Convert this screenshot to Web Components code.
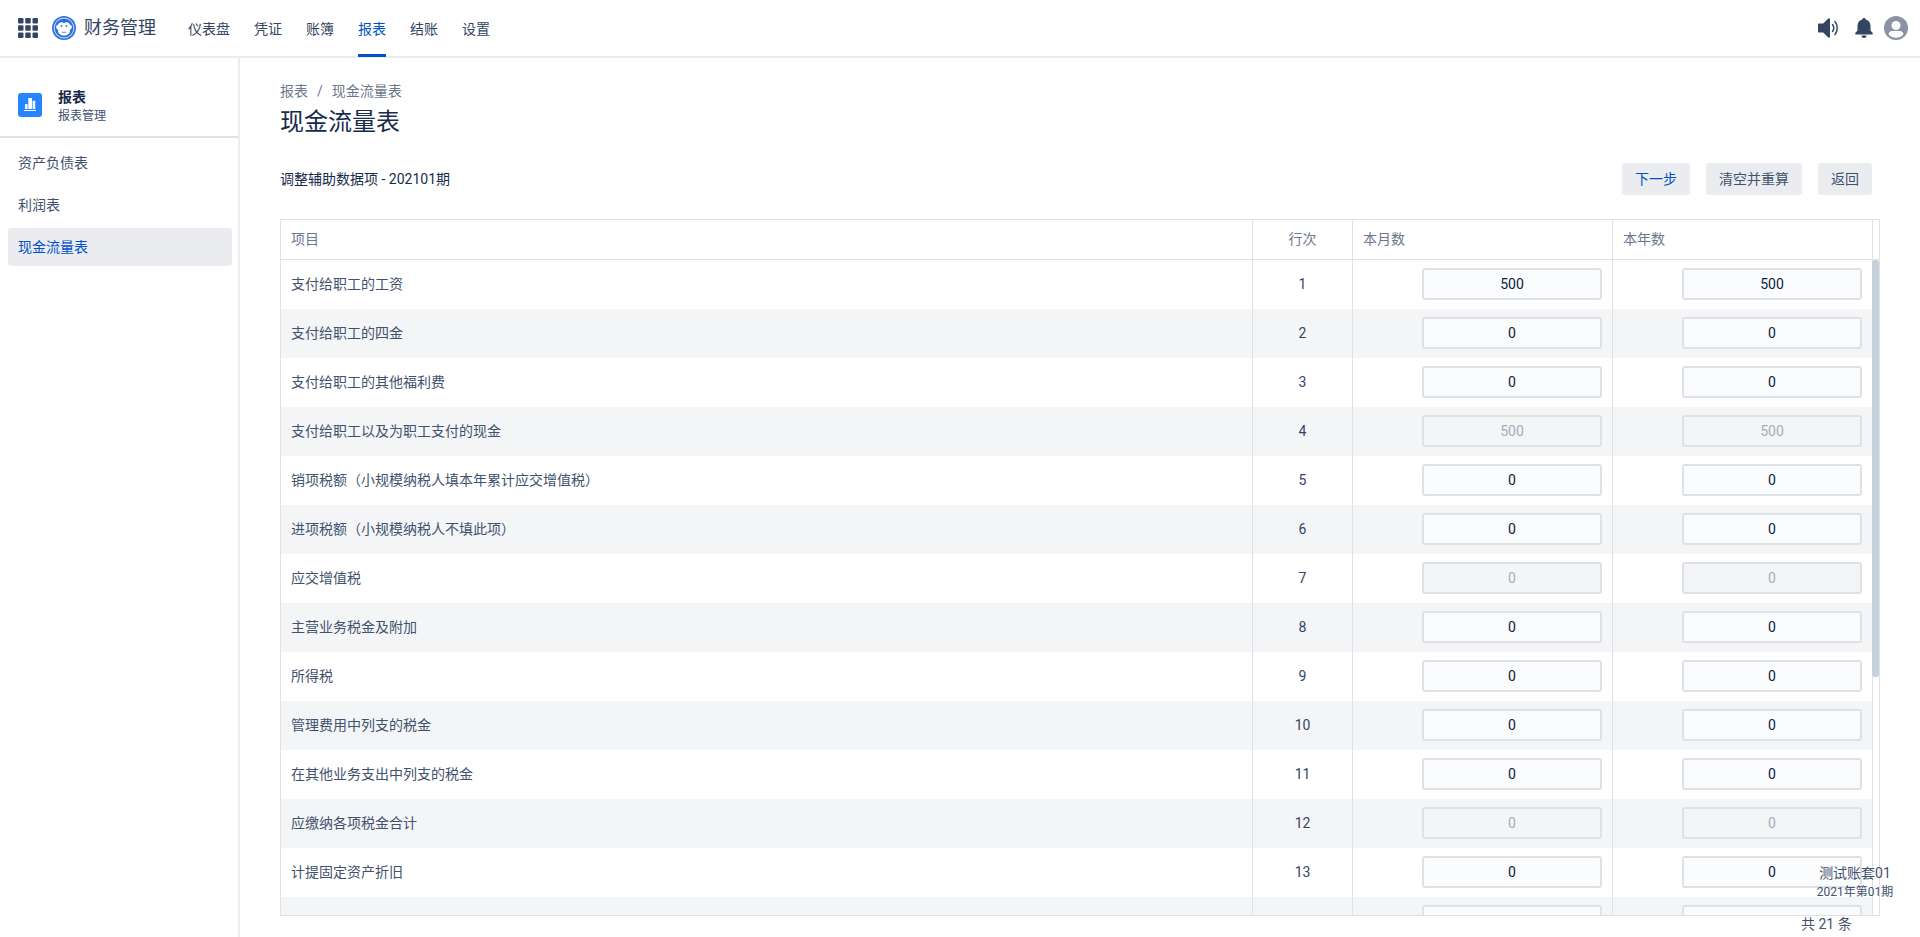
<!DOCTYPE html>
<html lang="zh"><head><meta charset="utf-8"><title>现金流量表</title>
<style>
html,body{margin:0;height:100%;overflow:hidden;background:#fff}
body{font:14px/20px Roboto,"Noto Sans CJK SC",sans-serif;color:#172b4d}
</style></head><body>
<app-shell></app-shell>
<script>
const html=(s)=>{const t=document.createElement('template');t.innerHTML=s;return t;};
function def(name,tpl,init){
  const T=html(tpl);
  customElements.define(name,class extends HTMLElement{
    constructor(){super();this.attachShadow({mode:'open'}).appendChild(T.content.cloneNode(true));}
    connectedCallback(){if(init&&!this._i){this._i=1;init.call(this,this.shadowRoot);}}
  });
}
def('top-bar',`<style>
:host{display:flex;align-items:center;height:56px;border-bottom:2px solid #ebecf0;padding:0 12px 0 18px;box-sizing:content-box;background:#fff}
.grid{width:20px;height:20px;display:block;margin-right:14px}
.logo{width:24px;height:24px;display:block;margin-right:8px}
.name{font-size:18px;line-height:24px;color:#344563;width:72px;margin-right:32px;white-space:nowrap}
nav{display:flex;gap:24px;height:56px;flex:1}
.right{display:flex;align-items:center}
</style>
<svg class="grid" viewBox="0 0 20 20" fill="#344563"><rect x="0" y="0" width="5.500" height="5.500" rx="1"/><rect x="7.250" y="0" width="5.500" height="5.500" rx="1"/><rect x="14.500" y="0" width="5.500" height="5.500" rx="1"/><rect x="0" y="7.250" width="5.500" height="5.500" rx="1"/><rect x="7.250" y="7.250" width="5.500" height="5.500" rx="1"/><rect x="14.500" y="7.250" width="5.500" height="5.500" rx="1"/><rect x="0" y="14.500" width="5.500" height="5.500" rx="1"/><rect x="7.250" y="14.500" width="5.500" height="5.500" rx="1"/><rect x="14.500" y="14.500" width="5.500" height="5.500" rx="1"/></svg>
<svg class="logo" viewBox="0 0 24 24"><circle cx="12" cy="12" r="12" fill="#2f6fdc"/><circle cx="12" cy="12" r="10.400" fill="#cfe0fa"/><circle cx="12" cy="12" r="9.400" fill="#2f6fdc"/><circle cx="6.800" cy="11" r="2.600" fill="#fff"/><circle cx="17.200" cy="11" r="2.600" fill="#fff"/><circle cx="9.400" cy="9.300" r="3.100" fill="#fff"/><circle cx="14.600" cy="9.300" r="3.100" fill="#fff"/><ellipse cx="12" cy="15" rx="6" ry="4.700" fill="#fff"/><circle cx="9.500" cy="10" r=".9" fill="#2f6fdc"/><circle cx="14.500" cy="10" r=".9" fill="#2f6fdc"/><path d="M10 16.300h4" stroke="#2f6fdc" stroke-width=".8"/></svg>
<div class="name">财务管理</div>
<nav><slot></slot></nav>
<div class="right"><slot name="right"></slot></div>`);
def('nav-tab',`<style>
:host{display:block;height:56px;line-height:58px;font-size:14px;color:#344563;position:relative;white-space:nowrap}
:host([active]){color:#0052cc}
:host([active])::after{content:"";position:absolute;left:0;right:0;bottom:-1px;height:3px;background:#0052cc}
</style><slot></slot>`);
def('side-bar',`<style>
:host{display:block;width:238px;border-right:2px solid #ebecf0;flex:none;background:#fff}
.head{height:42px;padding:27px 18px 9px;display:flex;align-items:center;gap:16px;border-bottom:2px solid #dfe1e6}
.ic{width:24px;height:24px;border-radius:3px;background:#2684ff;flex:none;margin-top:-2px}
.ic svg{display:block}
.t{font-weight:700;font-size:14px;line-height:18px;color:#172b4d}
.s{font-size:12px;line-height:16px;color:#42526e;margin-top:2px}
.list{padding:0 6px 0 8px}
</style>
<div class="head"><div class="ic"><svg width="24" height="24" viewBox="0 0 24 24" fill="#fff"><rect x="7" y="11" width="2.600" height="5"/><rect x="10.300" y="5" width="3.700" height="11"/><rect x="14.600" y="7.800" width="2.600" height="8.200"/><rect x="6" y="17" width="12" height="1"/></svg></div>
<div><div class="t">报表</div><div class="s">报表管理</div></div></div>
<div class="list"><slot></slot></div>`);
def('side-item',`<style>
:host{display:block;height:38px;line-height:38px;padding:0 10px;margin-top:4px;border-radius:3px;font-size:14px;color:#42526e;white-space:nowrap}
:host([active]){background:#ebecf0;color:#0052cc}
</style><slot></slot>`);
def('app-button',`<style>
:host{display:block;height:32px;line-height:32px;padding:0 13px;background:#ebecf0;border-radius:3px;color:#42526e;font-size:14px;white-space:nowrap}
:host([primary]){color:#0052cc}
</style><slot></slot>`);
def('num-field',`<style>
:host{display:block;width:180px;height:32px;box-sizing:border-box;border:2px solid #dfe1e6;border-radius:3px;background:#fafbfc;text-align:center;line-height:28px;font-size:14px;color:#091e42}
:host([disabled]){background:#f4f5f7;color:#a5adba}
</style><slot></slot>`);
def('data-row',`<style>
:host{display:grid;grid-template-columns:972px 100px 260px 260px;height:49px;box-sizing:border-box;background:#fff}
:host([alt]){background:#f4f5f7}
.c{box-sizing:border-box;display:flex;align-items:center;font-size:14px;color:#42526e;padding-bottom:1px}
.a{padding-left:11px;white-space:nowrap}
.b{justify-content:center;border-left:1px solid #dfe1e6;color:#344563}
.d{justify-content:flex-end;padding-right:10px;border-left:1px solid #dfe1e6}
</style>
<div class="c a"><slot name="label"></slot></div><div class="c b"><slot name="no"></slot></div>
<div class="c d"><slot name="m"></slot></div><div class="c d"><slot name="y"></slot></div>`);
def('cash-table',`<style>
:host{display:block;width:1600px;height:697px;box-sizing:border-box;border:1px solid #dfe1e6;position:relative;overflow:hidden}
.h{display:grid;grid-template-columns:971px 100px 260px 260px 7px;height:40px;border-bottom:1px solid #dfe1e6;box-sizing:border-box;font-size:14px;color:#6b778c;line-height:39px}
.h div{padding-left:10px;border-left:1px solid #dfe1e6;box-sizing:border-box}
.h div:first-child{border-left:0}
.h .n{padding:0;text-align:center}
.h .g{padding:0}
.body{display:flex;height:655px;overflow:hidden}
.rows{width:1592px;flex:none;margin-left:-1px}
.track{width:7px;box-sizing:border-box;border-left:1px solid #dfe1e6;flex:none}
.thumb{width:7px;height:417px;background:#c7d1db;border-radius:3px;margin-left:-1px}
</style>
<div class="h"><div>项目</div><div class="n">行次</div><div>本月数</div><div>本年数</div><div class="g"></div></div>
<div class="body"><div class="rows"><slot></slot></div><div class="track"><div class="thumb"></div></div></div>`);
def('top-actions',`<style>
:host{display:flex;align-items:center}
svg{display:block}
</style>
<svg width="24" height="24" viewBox="0 0 24 24" style="margin-right:12px"><path d="M3 7.500h4.200L12.300 2.600c.7-.6 1.700-.2 1.700.7v17.400c0 .9-1 1.300-1.700.7L7.200 16.500H3c-.6 0-1-.4-1-1v-7c0-.6.4-1 1-1z" fill="#344563"/><path d="M16.500 8.500c1.500 2 1.500 5 0 7" fill="none" stroke="#344563" stroke-width="1.500" stroke-linecap="round"/><path d="M19 5.500c2.900 3.500 2.900 9.500 0 13" fill="none" stroke="#344563" stroke-width="1.500" stroke-linecap="round"/></svg>
<svg width="24" height="24" viewBox="0 0 24 24" style="margin-right:8px"><path d="M12 2c1 0 1.600.6 1.800 1.600 3.100.8 4.700 3.300 4.700 6.400v4.500l2.200 2.600c.4.600.1 1.400-.7 1.400H4c-.8 0-1.100-.8-.7-1.400l2.200-2.600V10c0-3.100 1.600-5.600 4.700-6.400C10.400 2.600 11 2 12 2z" fill="#344563"/><path d="M9.400 19.400h5.200c-.2 1.500-1.200 2.600-2.600 2.600s-2.400-1.100-2.600-2.600z" fill="#344563"/></svg>
<svg width="24" height="24" viewBox="0 0 24 24"><defs><clipPath id="c"><circle cx="12" cy="12" r="10"/></clipPath></defs><circle cx="12" cy="12" r="12" fill="#8993a4"/><g clip-path="url(#c)"><circle cx="12" cy="9.500" r="4.500" fill="#fff"/><rect x="4.500" y="15" width="15" height="10" rx="4" fill="#fff"/></g></svg>`);
def('app-shell',`<style>
:host{display:block;height:937px;overflow:hidden;position:relative;background:#fff}
.main{display:flex;height:879px}
.content{flex:1;padding:20px 0 0 40px;min-width:0}
.crumb{font-size:14px;line-height:20px;color:#6b778c;display:flex;gap:9px;margin-top:3px}
h1{margin:5px 0 0;font-size:24px;font-weight:400;line-height:32px;color:#172b4d}
.bar{display:flex;align-items:center;height:32px;margin-top:25px;width:1592px}
.bar .ti{flex:1;font-size:14px;color:#172b4d}
.btns{display:flex;gap:16px}
.tw{margin-top:24px}
.acct{position:absolute;left:1805px;width:100px;top:863px;text-align:center;color:#42526e;font-size:14px;line-height:20px;white-space:nowrap}
.acct small{display:block;font-size:12px;line-height:18px}
.total{position:absolute;left:1801px;top:914px;font-size:14px;line-height:20px;color:#42526e;white-space:nowrap}
</style>
<top-bar>
<nav-tab>仪表盘</nav-tab><nav-tab>凭证</nav-tab><nav-tab>账簿</nav-tab><nav-tab active>报表</nav-tab><nav-tab>结账</nav-tab><nav-tab>设置</nav-tab>
<top-actions slot="right"></top-actions>
</top-bar>
<div class="main">
<side-bar><side-item style="margin-top:6px">资产负债表</side-item><side-item>利润表</side-item><side-item active>现金流量表</side-item></side-bar>
<div class="content">
<div class="crumb"><span>报表</span><span>/</span><span>现金流量表</span></div>
<h1>现金流量表</h1>
<div class="bar"><div class="ti">调整辅助数据项 - 202101期</div><div class="btns"><app-button primary>下一步</app-button><app-button>清空并重算</app-button><app-button>返回</app-button></div></div>
<div class="tw"><cash-table id="t"></cash-table></div>
</div></div>
<div class="acct">测试账套01<small>2021年第01期</small></div>
<div class="total">共 21 条</div>`,function(r){
  const data=[['支付给职工的工资',500,500],['支付给职工的四金',0,0],['支付给职工的其他福利费',0,0],['支付给职工以及为职工支付的现金',500,500,1],['销项税额（小规模纳税人填本年累计应交增值税）',0,0],['进项税额（小规模纳税人不填此项）',0,0],['应交增值税',0,0,1],['主营业务税金及附加',0,0],['所得税',0,0],['管理费用中列支的税金',0,0],['在其他业务支出中列支的税金',0,0],['应缴纳各项税金合计',0,0,1],['计提固定资产折旧',0,0],['','','']];
  const t=r.getElementById('t');
  data.forEach((d,i)=>{
    const row=document.createElement('data-row');
    if(i%2)row.setAttribute('alt','');
    const dis=d[3]?' disabled':'';
    row.innerHTML=`<span slot="label">${d[0]}</span><span slot="no">${d[0]?i+1:''}</span><num-field slot="m"${dis}>${d[1]}</num-field><num-field slot="y"${dis}>${d[2]}</num-field>`;
    t.appendChild(row);
  });
});
</script>
</body></html>
